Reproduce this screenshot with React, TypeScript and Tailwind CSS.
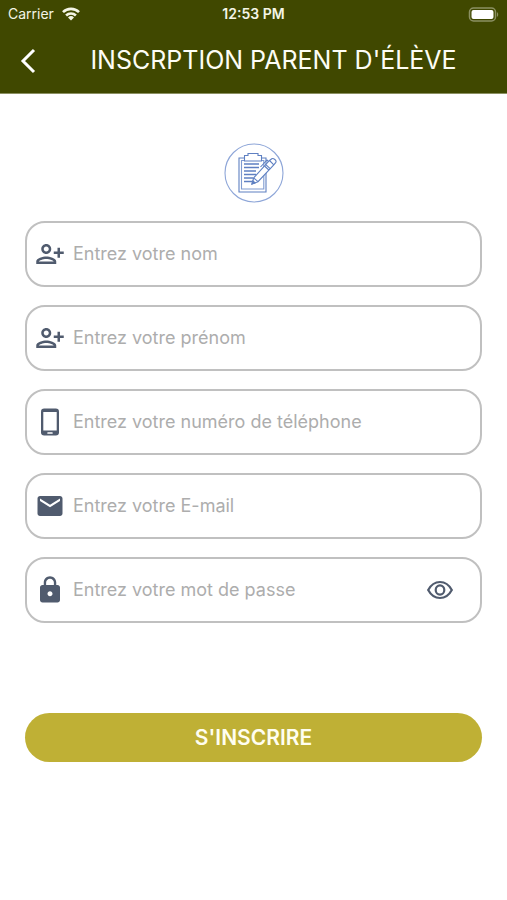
import { useState } from 'react';
import type { ComponentType } from 'react';
import { MdEmail, MdLock, MdOutlinePersonAddAlt1 } from 'react-icons/md';

interface IconProps {
  size?: number;
}

interface Field {
  name: string;
  type: string;
  placeholder: string;
  icon: ComponentType<IconProps>;
}

function PhoneIcon({ size = 30 }: IconProps) {
  return (
    <svg width={size} height={size} viewBox="0 0 30 30">
      <rect x="6" y="1.500" width="18" height="27" rx="3.200" fill="currentColor" />
      <rect x="8.300" y="5" width="13.400" height="18.500" fill="#fff" />
      <rect x="12.300" y="25.200" width="5.400" height="1.500" rx=".5" fill="#fff" />
    </svg>
  );
}

function EyeIcon({ size = 28 }: IconProps) {
  return (
    <svg width={size} height={size} viewBox="0 0 28 28" fill="none" stroke="currentColor" strokeWidth="2.2">
      <path d="M2.200 14C5.200 8.400 9.200 6 14 6s8.800 2.400 11.800 8c-3 5.600-7 8-11.800 8s-8.800-2.400-11.800-8z" />
      <ellipse cx="14" cy="14" rx="4.300" ry="4.600" />
    </svg>
  );
}

const FIELDS: Field[] = [
  { name: 'nom', type: 'text', placeholder: 'Entrez votre nom', icon: MdOutlinePersonAddAlt1 },
  { name: 'prenom', type: 'text', placeholder: 'Entrez votre prénom', icon: MdOutlinePersonAddAlt1 },
  { name: 'telephone', type: 'tel', placeholder: 'Entrez votre numéro de téléphone', icon: PhoneIcon },
  { name: 'email', type: 'email', placeholder: 'Entrez votre E-mail', icon: MdEmail },
  { name: 'password', type: 'password', placeholder: 'Entrez votre mot de passe', icon: MdLock },
];

function StatusBar() {
  return (
    <div className="grid h-7 grid-cols-3 items-center px-2 text-sm text-[#f4f5e6]">
      <div className="flex items-center gap-2">
        <span>Carrier</span>
        <svg width="18" height="14" viewBox="0 0 18 14" fill="none" stroke="currentColor" strokeWidth="2.6">
          <path d="M1 5.200a11.300 11.300 0 0 1 16 0" />
          <path d="M4.100 8.500a7 7 0 0 1 9.800 0" />
          <path d="M9 13.600l-3-3.100a4.300 4.300 0 0 1 6 0z" fill="currentColor" stroke="none" />
        </svg>
      </div>
      <span className="text-center font-semibold">12:53 PM</span>
      <svg className="justify-self-end" width="31" height="15" viewBox="0 0 31 15">
        <rect x="1.500" y="1" width="26" height="13" rx="4" fill="none" stroke="#8b9062" strokeWidth="1.500" />
        <rect x="3.500" y="3" width="22" height="9" rx="2" fill="#fff" />
        <path d="M29 5.200c1.600.6 1.600 4 0 4.600z" fill="#8b9062" />
      </svg>
    </div>
  );
}

function ClipboardLogo() {
  return (
    <svg width="60" height="60" viewBox="0 0 60 60" fill="none" stroke="#5f80c2" strokeWidth="1.1">
      <circle cx="30" cy="30" r="29" stroke="#8ea6d8" />
      <path d="M15 15h27v34H15z" />
      <path d="M17.500 17.500h22.300v28.500H17.500z" stroke="#7f9ad0" />
      <path d="M20.500 18v-5.500h3.500V10.500h10v2h3.500V18z" fill="#fff" />
      <path d="M20 21h15M20 24.500h15M20 28h12M20 31.500h12M20 35h9M20 38.500h8" strokeWidth="1.4" />
      <path d="M28 41l1.700-6.200L45.500 17.500l2.300-1.800c1.600-1 5.200 2 4 3.700l-2 2.500L34 38.700z" fill="#fff" />
      <path d="M29.700 34.800l4.300 3.900M40.500 23l4.400 4M41.800 21.600l4.400 4M45.500 17.500l4.300 4.400M44.500 18.500l-1.500-1.500-6.500 7" />
      <path d="M28 41l.9-3.200 2.300 2.100z" fill="#5f80c2" />
    </svg>
  );
}

export default function App() {
  const [showPassword, setShowPassword] = useState(false);

  return (
    <div className="min-h-screen bg-white font-['Inter',sans-serif]">
      <header className="border-b border-[#8b9062] bg-[#404800] pb-2">
        <StatusBar />
        <div className="flex h-[57px] items-center pt-2">
          <button type="button" aria-label="Retour" className="flex w-14 shrink-0 justify-center text-white">
            <svg width="16" height="26" viewBox="0 0 16 26" fill="none" stroke="currentColor" strokeWidth="3">
              <path d="M14 2L3 13l11 11" />
            </svg>
          </button>
          <h1 className="flex-1 pr-4 text-center text-[25px] whitespace-nowrap text-[#fdfdf5]">INSCRPTION PARENT D'ÉLÈVE</h1>
        </div>
      </header>

      <form className="px-[25px] pt-[49px] pb-8" onSubmit={e => e.preventDefault()}>
        <div className="mb-[18px] flex justify-center">
          <ClipboardLogo />
        </div>

        <div className="flex flex-col gap-[18px]">
          {FIELDS.map(({ name, type, placeholder, icon: Icon }) => (
            <div
              key={name}
              className="flex h-[66px] items-center rounded-[20px] border-2 border-[#c0c0c0] pr-[26px] pl-2 text-[#505b6e]"
            >
              <label htmlFor={name} aria-label={placeholder} className="shrink-0">
                <Icon size={30} />
              </label>
              <input
                id={name}
                name={name}
                type={name === 'password' && showPassword ? 'text' : type}
                placeholder={placeholder}
                className="ml-2 min-w-0 flex-1 text-lg outline-none placeholder:text-[#adadad]"
              />
              {name === 'password' && (
                <button
                  type="button"
                  aria-label="Afficher le mot de passe"
                  onClick={() => setShowPassword(prev => !prev)}
                >
                  <EyeIcon size={28} />
                </button>
              )}
            </div>
          ))}
        </div>

        <button
          type="submit"
          className="mt-[90px] h-[49px] w-full rounded-full bg-[#bfb035] text-[21px] font-semibold text-[#fffef0]"
        >
          S'INSCRIRE
        </button>
      </form>
    </div>
  );
}
